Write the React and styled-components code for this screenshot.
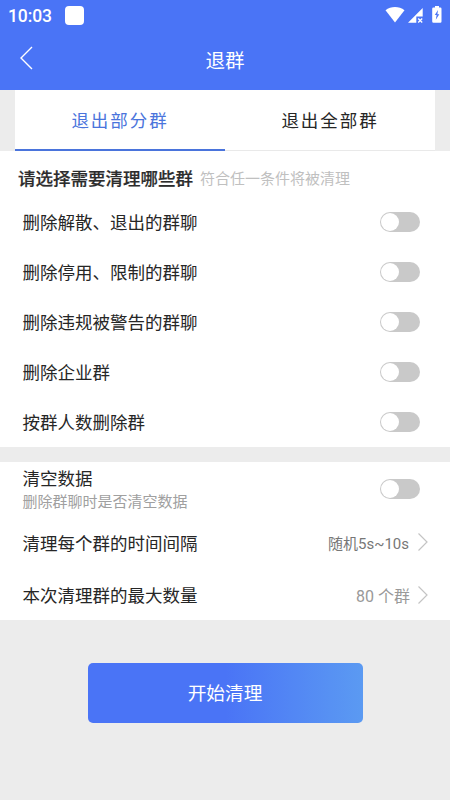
import React from "react";
import styled, { createGlobalStyle } from "styled-components";

const GlobalStyle = createGlobalStyle`
  * { box-sizing: border-box; }
  body {
    margin: 0;
    background: #ececec;
    font-family: Roboto, "Noto Sans CJK SC", sans-serif;
    color: #262626;
  }
`;

const Screen = styled.div`
  width: 450px;
  height: 800px;
  overflow: hidden;
  background: #ececec;
`;

const Header = styled.header`
  height: 90px;
  background: #4a74f6;
  color: #fff;
`;

const StatusBar = styled.div`
  height: 30px;
  display: flex;
  align-items: center;
  padding: 1px 8px 0;
`;

const Clock = styled.span`
  width: 57px;
  font-size: 17.5px;
  font-weight: 500;
  letter-spacing: -0.1px;
  line-height: 30px;
`;

const AppBadge = styled.span`
  width: 19px;
  height: 19px;
  margin-top: -1px;
  border-radius: 4px;
  background: #fff;
`;

const StatusIcons = styled.svg`
  width: 58px;
  height: 20px;
  margin: -1px 0 0 auto;
`;

const NavBar = styled.div`
  height: 60px;
  display: grid;
  grid-template-columns: 60px 1fr 60px;
  align-items: center;
`;

const BackIcon = styled.svg`
  width: 14px;
  height: 24px;
  margin: -4px 0 0 19px;
`;

const Title = styled.h1`
  margin: 0;
  padding-top: 3px;
  text-align: center;
  font-size: 19.5px;
  font-weight: 400;
  line-height: 57px;
`;

const Tabs = styled.nav`
  height: 61px;
  display: flex;
  margin: 0 15px;
  background: #fff;
`;

const Tab = styled.button`
  flex: 1;
  border: 0;
  border-bottom: ${(p) => (p.$active ? "2px solid #4a74dc" : "1px solid #e9e9e9")};
  padding: 0 0 ${(p) => (p.$active ? "0" : "1px")};
  background: none;
  color: ${(p) => (p.$active ? "#4a74dc" : "#262626")};
  font: 400 17.5px/58px "Noto Sans CJK SC", sans-serif;
  letter-spacing: 1.95px;
`;

const Panel = styled.section`
  background: #fff;
  height: ${(p) => p.$height}px;
  margin-bottom: ${(p) => p.$gap || 0}px;
`;

const Heading = styled.div`
  height: 46px;
  display: flex;
  align-items: center;
  gap: 7px;
  padding: 9px 0 0 18px;
`;

const HeadingText = styled.h2`
  margin: 0;
  font-size: 17.5px;
  font-weight: 500;
  line-height: 26px;
  color: #2c2c2c;
  -webkit-text-stroke: 0.2px #2c2c2c;
`;

const Hint = styled.span`
  font-size: 15px;
  line-height: 24px;
  color: #c0c0c0;
`;

const Row = styled.div`
  height: ${(p) => p.$height || 50}px;
  display: flex;
  align-items: center;
  justify-content: space-between;
  padding: 0 ${(p) => (p.$link ? 21 : 30)}px 0 22.5px;
`;

const Label = styled.div`
  padding-top: ${(p) => p.$drop || 0}px;
  font-size: 17.5px;
  line-height: 26px;
`;

const SubLabel = styled.div`
  font-size: 15px;
  line-height: 20px;
  color: #a0a0a0;
`;

const Switch = styled.button`
  width: 40px;
  height: 20px;
  border: 0;
  border-radius: 10px;
  padding: 1px;
  background: #c9c9c9;
  display: flex;
`;

const Knob = styled.span`
  width: 18px;
  height: 18px;
  border-radius: 50%;
  background: #fff;
`;

const Value = styled.div`
  display: flex;
  align-items: center;
  gap: ${(p) => p.$gap}px;
  font-size: ${(p) => p.$size}px;
  color: ${(p) => p.$color};
`;

const Chevron = styled.svg`
  width: 12px;
  height: 20px;
  margin-top: -1px;
`;

const Footer = styled.footer`
  display: flex;
  justify-content: center;
  padding-top: 42.5px;
`;

const StartButton = styled.button`
  width: 275px;
  height: 60px;
  border: 0;
  border-radius: 5px;
  padding: 0 0 2px;
  background: linear-gradient(90deg, #4a74f6 50%, #5b9af2);
  color: #fff;
  font: 400 18.7px/58px "Noto Sans CJK SC", sans-serif;
`;

const filters = [
  "删除解散、退出的群聊",
  "删除停用、限制的群聊",
  "删除违规被警告的群聊",
  "删除企业群",
  "按群人数删除群",
];

const Toggle = () => (
  <Switch role="switch" aria-checked="false">
    <Knob />
  </Switch>
);

const Arrow = () => (
  <Chevron viewBox="0 0 12 20" fill="none" stroke="#c4c4c4" strokeWidth="1.2">
    <path d="M1.5 1.5 10 10 1.5 18.5" />
  </Chevron>
);

export default function App() {
  return (
    <Screen>
      <GlobalStyle />
      <Header>
        <StatusBar>
          <Clock>10:03</Clock>
          <AppBadge />
          <StatusIcons viewBox="0 0 58 20" fill="#fff">
            <path d="M1.5 5.2C7 .9 15 .9 20.5 5.2L11 17.5Z" />
            <path d="M24 17.7 38.7 3V11.5h-6.4v6.2Z" />
            <path d="m34.2 13.5 4 4m0-4-4 4" stroke="#fff" strokeWidth="1.3" />
            <path
              fillRule="evenodd"
              d="M51 1h4v1.6h1.3q1.2 0 1.2 1.2v12.6q0 1.3-1.2 1.3h-6.8q-1.3 0-1.3-1.3V3.8q0-1.2 1.3-1.2H51ZM54 5l-3.2 5h1.8l-.8 4.8 3.5-5.6h-1.9Z"
            />
          </StatusIcons>
        </StatusBar>
        <NavBar>
          <BackIcon viewBox="0 0 14 24" fill="none" stroke="#fff" strokeWidth="1.4">
            <path d="M13 1 2 12l11 11" />
          </BackIcon>
          <Title>退群</Title>
        </NavBar>
      </Header>

      <Tabs>
        <Tab $active>退出部分群</Tab>
        <Tab>退出全部群</Tab>
      </Tabs>

      <Panel $height={296} $gap={15}>
        <Heading>
          <HeadingText>请选择需要清理哪些群</HeadingText>
          <Hint>符合任一条件将被清理</Hint>
        </Heading>
        {filters.map((name) => (
          <Row key={name}>
            <Label $drop={2}>{name}</Label>
            <Toggle />
          </Row>
        ))}
      </Panel>

      <Panel $height={158}>
        <Row $height={53}>
          <div>
            <Label>清空数据</Label>
            <SubLabel>删除群聊时是否清空数据</SubLabel>
          </div>
          <Toggle />
        </Row>
        <Row $link $height={55}>
          <Label $drop={2}>清理每个群的时间间隔</Label>
          <Value $size={15} $gap={8} $color="#777">
            随机5s~10s
            <Arrow />
          </Value>
        </Row>
        <Row $link $height={50}>
          <Label $drop={2}>本次清理群的最大数量</Label>
          <Value $size={16} $gap={7} $color="#999">
            80 个群
            <Arrow />
          </Value>
        </Row>
      </Panel>

      <Footer>
        <StartButton>开始清理</StartButton>
      </Footer>
    </Screen>
  );
}
